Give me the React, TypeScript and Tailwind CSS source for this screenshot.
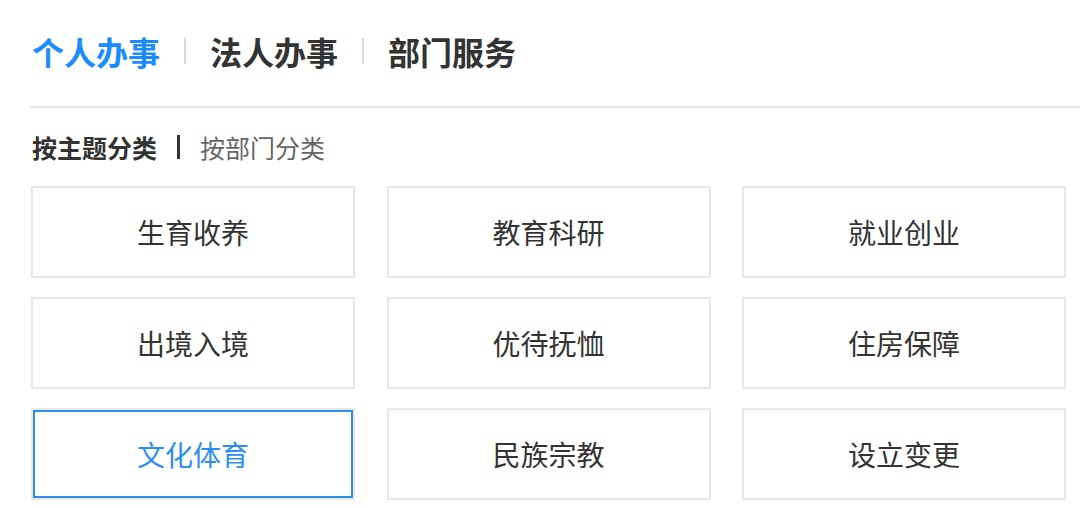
import React from "react";

const items = [
  "生育收养",
  "教育科研",
  "就业创业",
  "出境入境",
  "优待抚恤",
  "住房保障",
  "文化体育",
  "民族宗教",
  "设立变更",
];

export default function App() {
  return (
    <div
      className="w-[1080px] h-[508px] bg-white pl-[30px] overflow-hidden"
      style={{ fontFamily: '"Noto Sans CJK SC", "Noto Sans", sans-serif' }}
    >
      <div className="flex items-center h-[106px] pb-[4px] text-[32px] font-bold leading-none">
        <span className="pl-[2px] text-[#1a8cff]">个人办事</span>
        <span className="mx-[24px] w-[2px] h-[26px] bg-[#d9d9d9]" />
        <span className="text-[#333333]">法人办事</span>
        <span className="mx-[24px] w-[2px] h-[26px] bg-[#d9d9d9]" />
        <span className="text-[#333333]">部门服务</span>
      </div>
      <div className="h-[2px] bg-[#e8e8e8]" />
      <div className="flex items-center h-[78px] text-[25px] leading-none pl-[2px]">
        <span className="font-bold text-[#333333]">按主题分类</span>
        <span className="mx-[20px] w-[3px] h-[24px] bg-[#333333]" />
        <span className="text-[#666666]">按部门分类</span>
      </div>
      <div className="ml-[1px] w-[1035px] grid grid-cols-3 gap-x-[31.5px] gap-y-[19px]">
        {items.map((t) => {
          const active = t === "文化体育";
          return (
            <div
              key={t}
              className={
                "h-[92px] flex items-center justify-center border-2 border-[#e8e8e8] text-[28px] " +
                (active
                  ? "text-[#2b8df0] shadow-[inset_0_0_0_2px_#2b8df0]"
                  : "text-[#333333]")
              }
            >
              {t}
            </div>
          );
        })}
      </div>
    </div>
  );
}
